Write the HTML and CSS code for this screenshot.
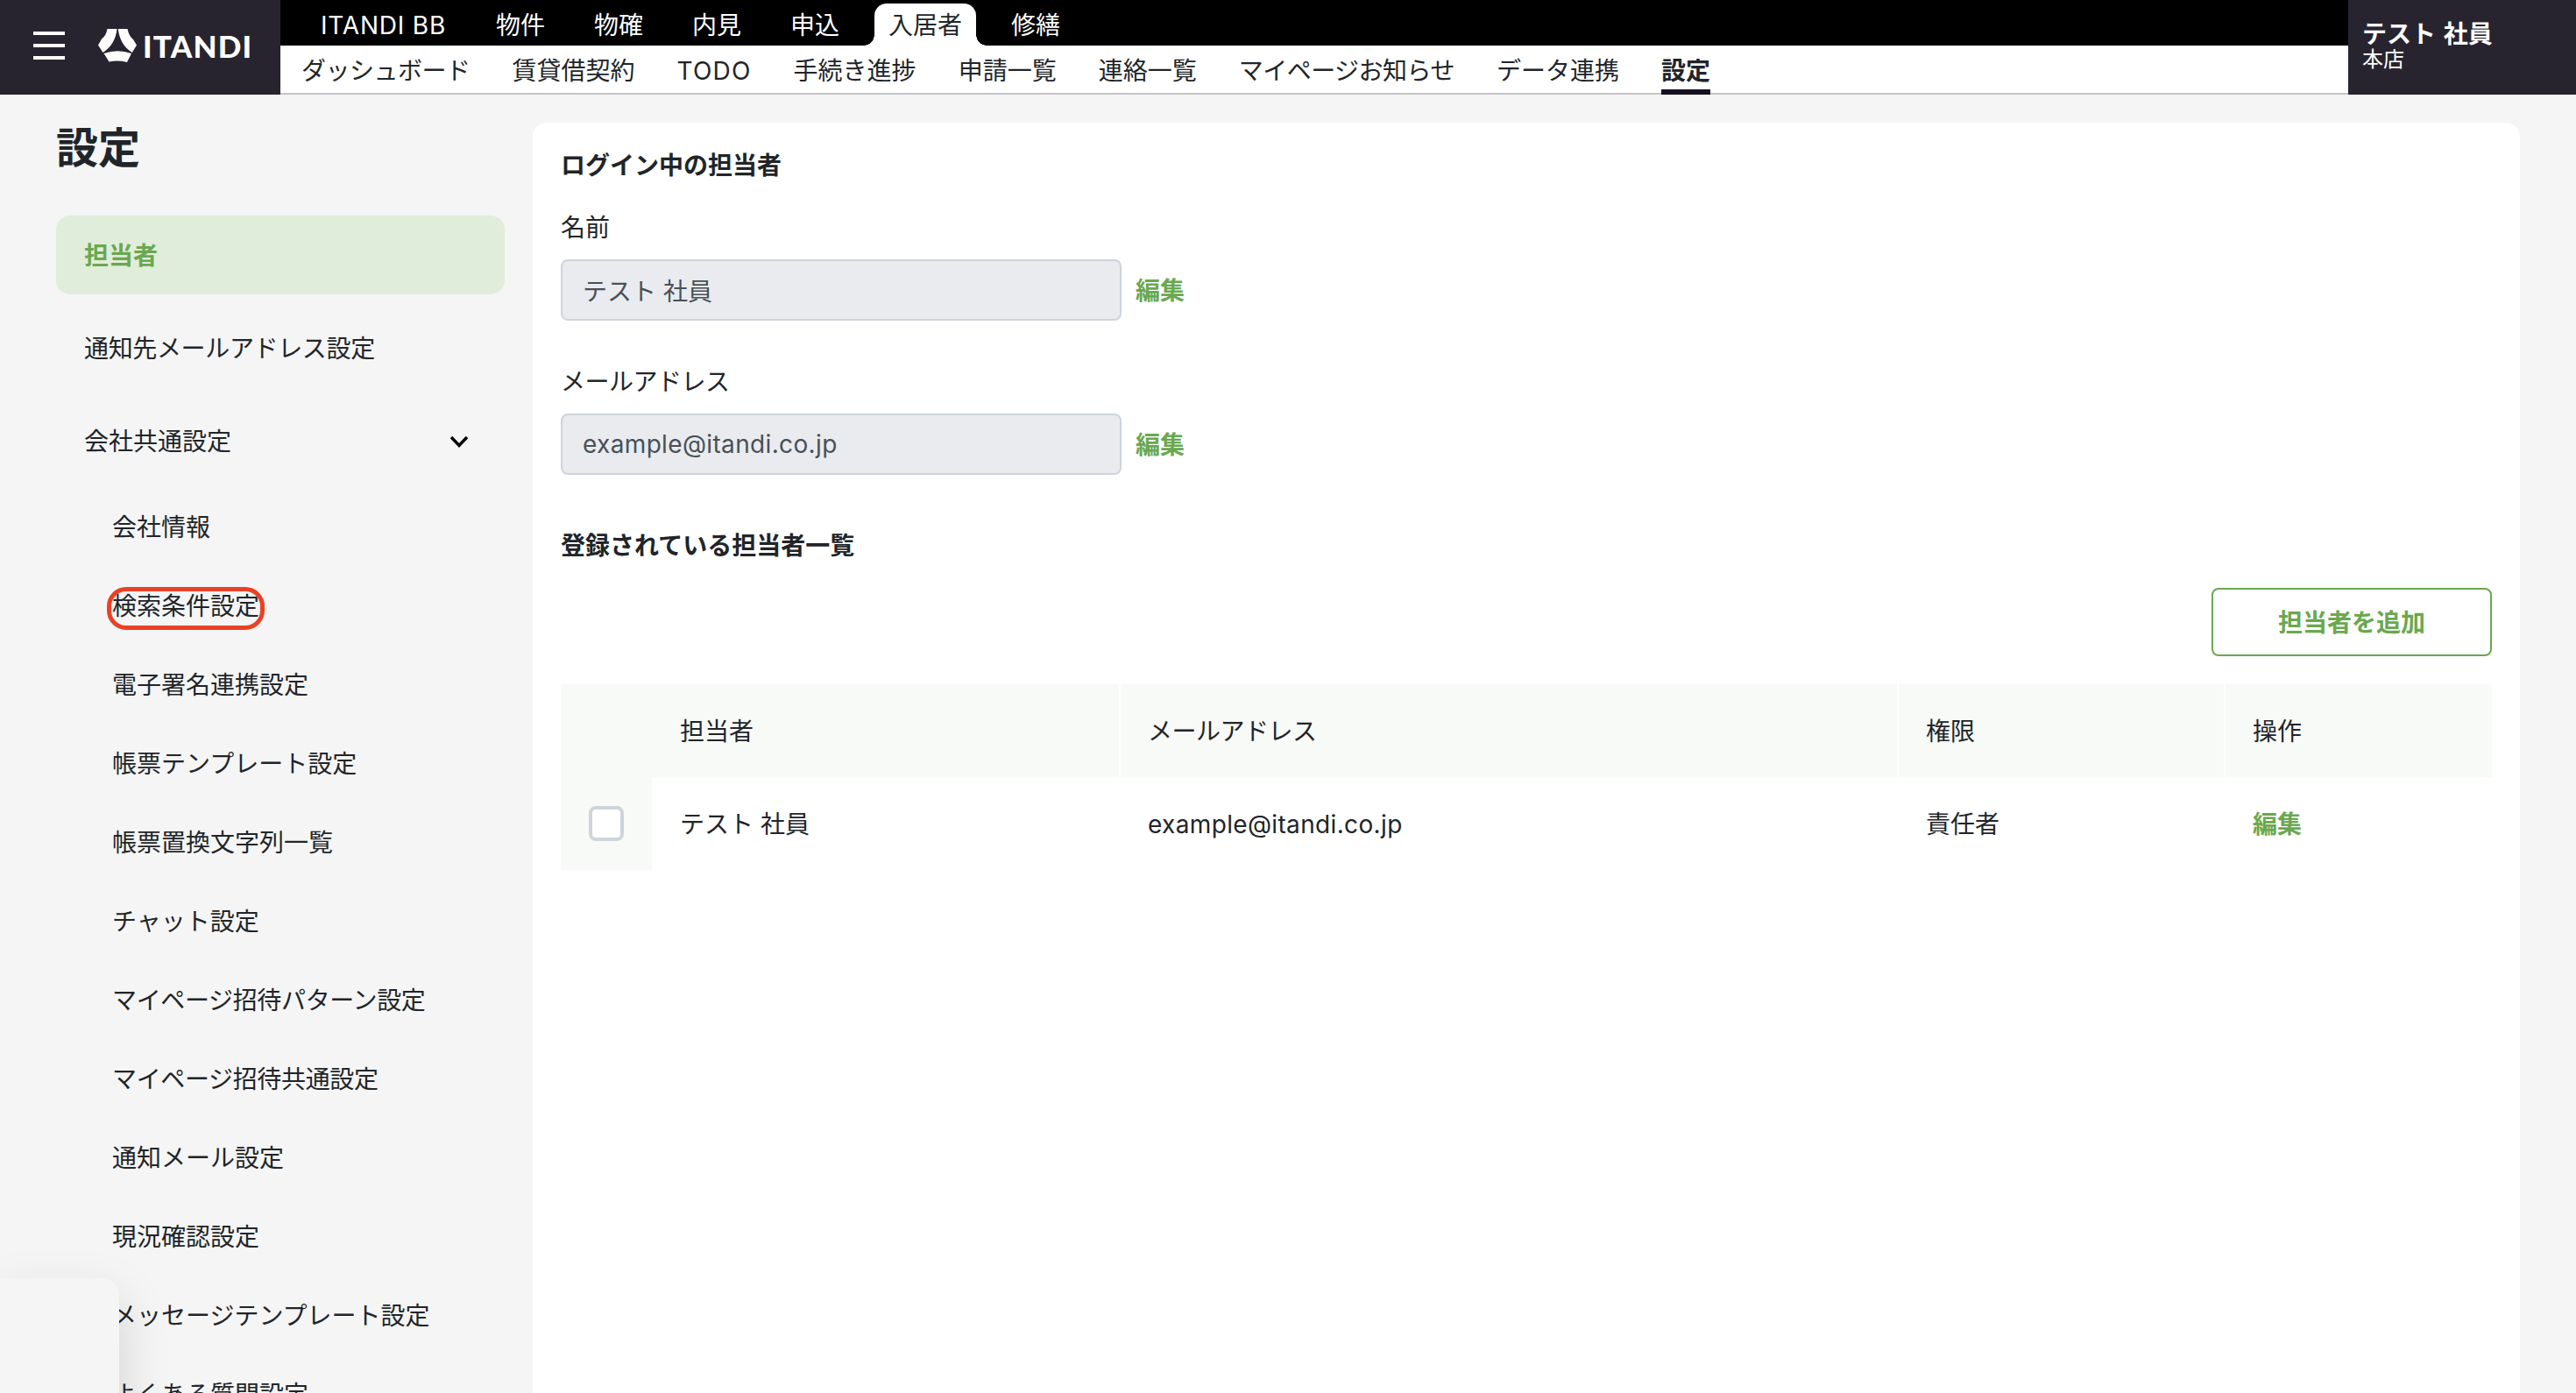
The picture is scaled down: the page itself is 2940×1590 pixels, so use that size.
FILE: index.html
```html
<!DOCTYPE html>
<html lang="ja">
<head>
    <meta charset="UTF-8">
    <meta name="viewport" content="width=device-width, initial-scale=1.0">
    <title>設定</title>
    <link rel="stylesheet" href="styles.css">
</head>
<body>
    <header class="header">
        <div class="brand">
            <button class="menu-button" type="button" aria-label="メニュー">
                <span></span>
                <span></span>
                <span></span>
            </button>
            <svg class="brand-mark" viewBox="0 0 44 38" aria-hidden="true">
                <path d="M10.5 0H21.5C20.5 11 15 21 5.500 27L0 18.500L4 11.500Q9 8 10.500 0Z" fill="#fff"/>
                <path d="M22.800 0H33.500Q35 8 40 12L44 18.500L38.800 27C29 21 24 11 22.800 0Z" fill="#fff"/>
                <path d="M6.500 28Q22 22.500 38 28L33 38Q22 35.500 12.500 37.500Z" fill="#fff"/>
            </svg>
            <span class="brand-name">ITANDI</span>
        </div>

        <div class="navs">
            <nav class="service-nav">
                <a class="service service-bb">ITANDI BB</a>
                <a class="service">物件</a>
                <a class="service">物確</a>
                <a class="service">内見</a>
                <a class="service">申込</a>
                <a class="service active">入居者</a>
                <a class="service">修繕</a>
            </nav>
            <nav class="page-nav">
                <a class="page kana">ダッシュボード</a>
                <a class="page">賃貸借契約</a>
                <a class="page page-latin">TODO</a>
                <a class="page">手続き進捗</a>
                <a class="page">申請一覧</a>
                <a class="page">連絡一覧</a>
                <a class="page kana">マイページお知らせ</a>
                <a class="page">データ連携</a>
                <a class="page active">設定</a>
            </nav>
        </div>

        <div class="user">
            <div class="user-name">テスト 社員</div>
            <div class="user-branch">本店</div>
        </div>
    </header>

    <div class="layout">
        <aside class="sidebar">
            <h1>設定</h1>
            <ul class="menu">
                <li class="menu-item active">担当者</li>
                <li class="menu-item kana-light">通知先メールアドレス設定</li>
                <li class="menu-item">
                    会社共通設定
                    <svg class="chevron" viewBox="0 0 22 16" aria-hidden="true">
                        <path d="M2 3L11 12.500L20 3" fill="none" stroke="#000" stroke-width="3.4"/>
                    </svg>
                </li>
            </ul>
            <ul class="submenu">
                <li>会社情報</li>
                <li><span class="marked">検索条件設定</span></li>
                <li>電子署名連携設定</li>
                <li>帳票テンプレート設定</li>
                <li>帳票置換文字列一覧</li>
                <li>チャット設定</li>
                <li class="kana-light">マイページ招待パターン設定</li>
                <li class="kana-light">マイページ招待共通設定</li>
                <li>通知メール設定</li>
                <li>現況確認設定</li>
                <li>メッセージテンプレート設定</li>
                <li>よくある質問設定</li>
            </ul>
        </aside>

        <main class="panel">
            <h2>ログイン中の担当者</h2>
            <label for="name">名前</label>
            <div class="field">
                <input type="text" id="name" value="テスト 社員" disabled>
                <a class="edit">編集</a>
            </div>
            <label for="mail" class="kana">メールアドレス</label>
            <div class="field">
                <input type="text" id="mail" class="latin" value="example@itandi.co.jp" disabled>
                <a class="edit">編集</a>
            </div>

            <h2 class="list-title">登録されている担当者一覧</h2>
            <div class="actions">
                <button class="add-button" type="button">担当者を追加</button>
            </div>

            <table class="staff">
                <colgroup>
                    <col class="col-check">
                    <col class="col-name">
                    <col class="col-mail">
                    <col class="col-role">
                    <col class="col-action">
                </colgroup>
                <thead>
                    <tr>
                        <th colspan="2" class="first">担当者</th>
                        <th class="kana">メールアドレス</th>
                        <th>権限</th>
                        <th>操作</th>
                    </tr>
                </thead>
                <tbody>
                    <tr>
                        <td class="check"><input type="checkbox" aria-label="選択"></td>
                        <td>テスト 社員</td>
                        <td class="latin">example@itandi.co.jp</td>
                        <td>責任者</td>
                        <td><a class="edit">編集</a></td>
                    </tr>
                </tbody>
            </table>
        </main>
    </div>

    <div class="float-box"></div>
</body>
</html>
```

FILE: styles.css
```css
* {
    box-sizing: border-box;
}

body {
    margin: 0;
    height: 1590px;
    overflow: hidden;
    background-color: #f5f5f5;
    color: #212529;
    font-family: Inter, "Noto Sans CJK JP", sans-serif;
    font-size: 28px;
    line-height: 42px;
}

h1, h2, ul {
    margin: 0;
    padding: 0;
}

ul {
    list-style: none;
}

/* Letter spacing for kana and latin strings */
.kana {
    letter-spacing: -0.5px;
}

.kana-light {
    letter-spacing: -0.35px;
}

.latin {
    letter-spacing: 0.35px;
}

/* Header */
.header {
    display: flex;
    height: 108px;
}

.brand {
    display: flex;
    align-items: center;
    width: 320px;
    padding: 0 0 4px 38px;
    background-color: #28242f;
}

.menu-button {
    display: flex;
    flex-direction: column;
    gap: 10px;
    width: 36px;
    padding: 0;
    border: 0;
    background: none;
}

.menu-button span {
    height: 4px;
    background-color: #fff;
}

.brand-mark {
    width: 44px;
    height: 38px;
    margin-left: 38px;
}

.brand-name {
    margin-left: 7px;
    color: #fff;
    font-family: Lato, sans-serif;
    font-size: 35px;
    font-weight: 900;
    letter-spacing: 1.2px;
}

.navs {
    flex: 1;
}

.service-nav {
    display: flex;
    height: 52px;
    padding-left: 18px;
    background-color: #000;
}

.service {
    padding: 8px 28px 0;
    color: #fff;
    white-space: nowrap;
}

.service-bb {
    width: 200px;
    letter-spacing: 0.8px;
}

.service.active {
    position: relative;
    z-index: 0;
    color: #212529;
}

.service.active::before {
    content: "";
    position: absolute;
    z-index: -1;
    inset: 4px 12px 0;
    border-radius: 14px 14px 0 0;
    background-color: #fff;
}

.service.active::after {
    content: "";
    position: absolute;
    z-index: -1;
    left: 0;
    right: 0;
    bottom: 0;
    height: 12px;
    background:
        radial-gradient(circle at 0 0, transparent 11.5px, #fff 12px) left / 12px 12px no-repeat,
        radial-gradient(circle at 100% 0, transparent 11.5px, #fff 12px) right / 12px 12px no-repeat;
}

.page-nav {
    display: flex;
    gap: 48px;
    height: 56px;
    padding-left: 24px;
    border-bottom: 2px solid #c4c4c9;
    background-color: #fff;
}

.page {
    height: 56px;
    padding-top: 8px;
    white-space: nowrap;
}

.page-latin {
    letter-spacing: 1.2px;
}

.page.active {
    border-bottom: 6px solid #151020;
    font-weight: 700;
}

.user {
    width: 260px;
    padding: 22px 16px 0;
    background-color: #28242f;
    color: #fff;
}

.user-name {
    font-weight: 700;
    line-height: 34px;
    word-spacing: 2px;
}

.user-branch {
    font-size: 24px;
    line-height: 24px;
}

/* Layout */
.layout {
    display: flex;
    height: 1482px;
}

.sidebar {
    width: 608px;
    padding: 25px 32px 0 64px;
}

h1 {
    height: 113px;
    font-size: 48px;
    line-height: 72px;
}

.menu {
    display: flex;
    flex-direction: column;
    gap: 16px;
}

.menu-item {
    display: flex;
    align-items: center;
    justify-content: space-between;
    height: 90px;
    padding: 2px 41px 0 32px;
    border-radius: 16px;
}

.menu-item.active {
    background-color: #e1eddb;
    color: #6aa84f;
    font-weight: 700;
}

.chevron {
    width: 22px;
    height: 16px;
}

.submenu {
    margin-top: 9px;
    padding-left: 64px;
}

.submenu li {
    height: 90px;
    line-height: 90px;
    white-space: nowrap;
}

.marked {
    position: relative;
}

.marked::after {
    content: "";
    box-sizing: border-box;
    position: absolute;
    left: -6px;
    top: -5px;
    width: 180px;
    height: 49px;
    border: 5px solid #ea4126;
    border-radius: 22px;
}

/* Main panel */
.panel {
    width: 2268px;
    margin-top: 32px;
    padding: 28px 32px 0;
    border-radius: 16px 16px 0 0;
    background-color: #fff;
}

h2 {
    font-size: 28px;
    font-weight: 700;
    line-height: 42px;
}

label {
    display: block;
    margin-top: 29px;
}

.field {
    display: flex;
    align-items: center;
    gap: 16px;
    margin-top: 15px;
}

.field input {
    width: 640px;
    height: 70px;
    padding: 0 23px;
    border: 2px solid #ced4da;
    border-radius: 8px;
    background-color: #e9ebef;
    color: #495057;
    font: inherit;
}

.field + label {
    margin-top: 49px;
}

.edit {
    color: #6aa84f;
    font-weight: 700;
}

.field .edit {
    padding-top: 2px;
}

.list-title {
    margin-top: 60px;
}

.actions {
    display: flex;
    justify-content: flex-end;
    margin-top: 27px;
}

.add-button {
    width: 320px;
    height: 78px;
    padding: 2px 0 0;
    border: 2px solid #6aa84f;
    border-radius: 8px;
    background-color: #fff;
    color: #6aa84f;
    font: inherit;
    font-weight: 700;
}

.staff {
    width: 2204px;
    margin-top: 32px;
    border-collapse: separate;
    border-spacing: 0;
    table-layout: fixed;
}

.col-check {
    width: 104px;
}

.col-name {
    width: 535px;
}

.col-mail {
    width: 888px;
}

.col-role {
    width: 373px;
}

th, td {
    height: 106px;
    padding: 2px 31px 0;
    text-align: left;
    font-weight: 400;
}

th {
    border-right: 2px solid #fff;
    background-color: #f8faf7;
}

th.first {
    padding-left: 136px;
}

td:nth-child(2) {
    padding-left: 32px;
}

th:last-child {
    border-right: 0;
}

td.check {
    padding: 0 32px;
    background-color: #f8faf7;
}

.check input {
    display: block;
    appearance: none;
    width: 40px;
    height: 40px;
    margin: 0;
    border: 4px solid #ced4da;
    border-radius: 8px;
    background-color: #fff;
}

/* Box docked at the bottom left corner */
.float-box {
    position: fixed;
    left: 0;
    top: 1459px;
    width: 136px;
    height: 160px;
    border-radius: 0 20px 0 0;
    background-color: #f5f5f5;
    box-shadow: 0 24px 60px rgba(0, 0, 0, 0.15);
}
```
